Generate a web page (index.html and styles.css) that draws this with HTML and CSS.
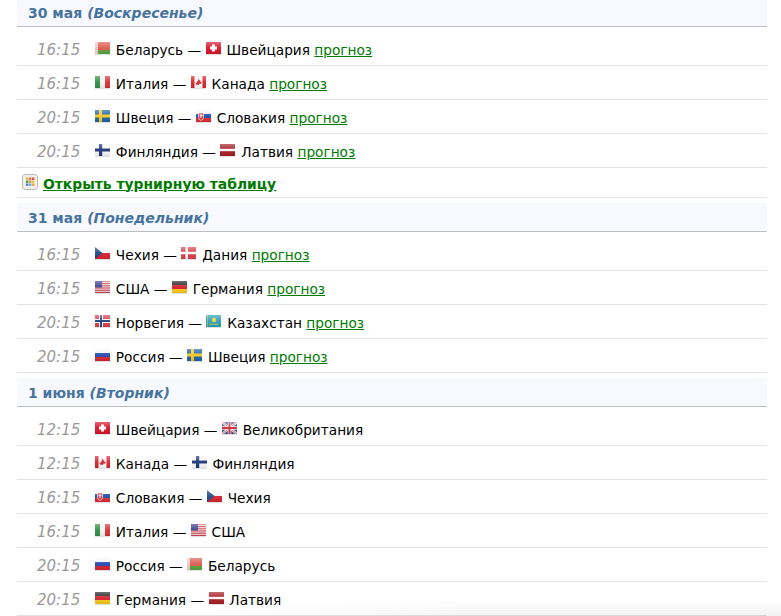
FILE: index.html
```html
<!DOCTYPE html>
<html lang="ru">
<head>
<meta charset="utf-8">
<title>Расписание</title>
<link rel="stylesheet" href="styles.css">
</head>
<body>
<svg class="defs" width="0" height="0" aria-hidden="true">
  <defs>
    <linearGradient id="gloss" x1="0" y1="0" x2="0" y2="1">
      <stop offset="0" stop-color="#fff" stop-opacity=".35"/>
      <stop offset=".5" stop-color="#fff" stop-opacity=".05"/>
      <stop offset="1" stop-color="#000" stop-opacity=".08"/>
    </linearGradient>
    <symbol id="by" viewBox="0 0 15 12"><rect width="15" height="8" fill="#dd5a4e"/><rect y="8" width="15" height="4" fill="#5da13f"/><rect width="3" height="12" fill="#f0c8c0"/></symbol>
    <symbol id="ch" viewBox="0 0 15 12"><rect width="15" height="12" fill="#d8132b"/><rect x="6" y="2.500" width="3" height="7" fill="#fff"/><rect x="4" y="4.500" width="7" height="3" fill="#fff"/></symbol>
    <symbol id="it" viewBox="0 0 15 12"><rect width="5" height="12" fill="#2f8f46"/><rect x="5" width="5" height="12" fill="#f4f4f0"/><rect x="10" width="5" height="12" fill="#d6323a"/></symbol>
    <symbol id="ca" viewBox="0 0 15 12"><rect width="15" height="12" fill="#fafafa"/><rect width="3.500" height="12" fill="#d8232a"/><rect x="11.500" width="3.500" height="12" fill="#d8232a"/><path d="M7.500 2.500l1 1.800.9-.4-.3 2.200 1.300-.6.300 1-.9 1.200H8v1.300H7V8.700H5.400l-.9-1.200.3-1 1.300.6-.3-2.200.9.400z" fill="#d8232a"/></symbol>
    <symbol id="se" viewBox="0 0 15 12"><rect width="15" height="12" fill="#1f62a8"/><rect x="4" width="3" height="12" fill="#f5c81e"/><rect y="4.500" width="15" height="3" fill="#f5c81e"/></symbol>
    <symbol id="sk" viewBox="0 0 15 12"><rect width="15" height="4" fill="#f5f5f5"/><rect y="4" width="15" height="4" fill="#1c50a8"/><rect y="8" width="15" height="4" fill="#dc2b34"/><path d="M2.500 3h5v4.500Q7.500 9.500 5 10.500 2.500 9.500 2.500 7.500z" fill="#dc2b34" stroke="#fff" stroke-width=".7"/><rect x="4.500" y="4" width="1" height="4" fill="#fff"/><rect x="3.500" y="5.200" width="3" height=".9" fill="#fff"/></symbol>
    <symbol id="fi" viewBox="0 0 15 12"><rect width="15" height="12" fill="#f6f6f6"/><rect x="4" width="3.200" height="12" fill="#1c3578"/><rect y="4.500" width="15" height="3" fill="#1c3578"/></symbol>
    <symbol id="lv" viewBox="0 0 15 12"><rect width="15" height="12" fill="#a81c24"/><rect y="4.800" width="15" height="2.400" fill="#fafafa"/></symbol>
    <symbol id="cz" viewBox="0 0 15 12"><rect width="15" height="6" fill="#f5f5f5"/><rect y="6" width="15" height="6" fill="#d7232e"/><path d="M0 0l7.500 6L0 12z" fill="#1e4a8c"/></symbol>
    <symbol id="dk" viewBox="0 0 15 12"><rect width="15" height="12" fill="#d9404a"/><rect x="4.500" width="2.400" height="12" fill="#fff"/><rect y="4.800" width="15" height="2.400" fill="#fff"/></symbol>
    <symbol id="us" viewBox="0 0 15 12"><rect width="15" height="12" fill="#f4f4f4"/><path d="M0 .7h15M0 2.500h15M0 4.300h15M0 6.100h15M0 7.900h15M0 9.700h15M0 11.500h15" stroke="#c9303c" stroke-width=".9"/><rect width="7" height="6.500" fill="#3c3f8f"/></symbol>
    <symbol id="de" viewBox="0 0 15 12"><rect width="15" height="4" fill="#222"/><rect y="4" width="15" height="4" fill="#d7202a"/><rect y="8" width="15" height="4" fill="#f6c81c"/></symbol>
    <symbol id="no" viewBox="0 0 15 12"><rect width="15" height="12" fill="#dc3c48"/><rect x="4" width="4" height="12" fill="#fff"/><rect y="4" width="15" height="4" fill="#fff"/><rect x="5" width="2" height="12" fill="#1d3f80"/><rect y="5" width="15" height="2" fill="#1d3f80"/></symbol>
    <symbol id="kz" viewBox="0 0 15 12"><rect width="15" height="12" fill="#2a9fb5"/><circle cx="8" cy="5" r="2.200" fill="#eed03a"/><path d="M3 9.200h9" stroke="#eed03a" stroke-width=".8"/><rect x="1" width="1" height="12" fill="#8fb872"/></symbol>
    <symbol id="ru" viewBox="0 0 15 12"><rect width="15" height="4" fill="#f6f6f6"/><rect y="4" width="15" height="4" fill="#2448b0"/><rect y="8" width="15" height="4" fill="#d7232e"/></symbol>
    <symbol id="gb" viewBox="0 0 15 12"><rect width="15" height="12" fill="#3d4a8e"/><path d="M0 0l15 12M15 0L0 12" stroke="#fff" stroke-width="2.200"/><path d="M0 0l15 12M15 0L0 12" stroke="#cf3a48" stroke-width=".8"/><rect x="5.800" width="3.400" height="12" fill="#fff"/><rect y="4.300" width="15" height="3.400" fill="#fff"/><rect x="6.500" width="2" height="12" fill="#cf2b3a"/><rect y="5" width="15" height="2" fill="#cf2b3a"/></symbol>
    <symbol id="flag-gloss" viewBox="0 0 15 12"><rect width="15" height="12" fill="url(#gloss)"/></symbol>
  </defs>
</svg>

<main class="schedule">
  <h2 class="day day-first">30 мая <em>(Воскресенье)</em></h2>
  <ul class="matches">
    <li class="match"><span class="time">16:15</span><span class="teams"><svg class="flag"><use href="#by"/><use href="#flag-gloss"/></svg> Беларусь — <svg class="flag"><use href="#ch"/><use href="#flag-gloss"/></svg> Швейцария <a href="#">прогноз</a></span></li>
    <li class="match"><span class="time">16:15</span><span class="teams"><svg class="flag"><use href="#it"/><use href="#flag-gloss"/></svg> Италия — <svg class="flag"><use href="#ca"/><use href="#flag-gloss"/></svg> Канада <a href="#">прогноз</a></span></li>
    <li class="match"><span class="time">20:15</span><span class="teams"><svg class="flag"><use href="#se"/><use href="#flag-gloss"/></svg> Швеция — <svg class="flag"><use href="#sk"/><use href="#flag-gloss"/></svg> Словакия <a href="#">прогноз</a></span></li>
    <li class="match"><span class="time">20:15</span><span class="teams"><svg class="flag"><use href="#fi"/><use href="#flag-gloss"/></svg> Финляндия — <svg class="flag"><use href="#lv"/><use href="#flag-gloss"/></svg> Латвия <a href="#">прогноз</a></span></li>
  </ul>
  <p class="table-link">
    <svg class="table-icon" viewBox="0 0 16 16" aria-hidden="true">
      <rect x=".5" y=".5" width="15" height="15" rx="3" fill="#f1efe9" stroke="#b9b9b5"/>
      <rect x="4" y="3.500" width="2.400" height="2.400" fill="#e8b23a"/><rect x="7" y="3.500" width="2.400" height="2.400" fill="#e86a5a"/><rect x="10" y="3.500" width="2.400" height="2.400" fill="#d84a4a"/>
      <rect x="4" y="6.500" width="2.400" height="2.400" fill="#4a9a4a"/><rect x="7" y="6.500" width="2.400" height="2.400" fill="#e8963a"/><rect x="10" y="6.500" width="2.400" height="2.400" fill="#e8c83a"/>
      <rect x="4" y="9.500" width="2.400" height="2.400" fill="#4a7ad8"/><rect x="7" y="9.500" width="2.400" height="2.400" fill="#5ab0d8"/><rect x="10" y="9.500" width="2.400" height="2.400" fill="#f0a030"/>
    </svg>
    <a href="#">Открыть турнирную таблицу</a>
  </p>

  <h2 class="day">31 мая <em>(Понедельник)</em></h2>
  <ul class="matches">
    <li class="match"><span class="time">16:15</span><span class="teams"><svg class="flag"><use href="#cz"/><use href="#flag-gloss"/></svg> Чехия — <svg class="flag"><use href="#dk"/><use href="#flag-gloss"/></svg> Дания <a href="#">прогноз</a></span></li>
    <li class="match"><span class="time">16:15</span><span class="teams"><svg class="flag"><use href="#us"/><use href="#flag-gloss"/></svg> США — <svg class="flag"><use href="#de"/><use href="#flag-gloss"/></svg> Германия <a href="#">прогноз</a></span></li>
    <li class="match"><span class="time">20:15</span><span class="teams"><svg class="flag"><use href="#no"/><use href="#flag-gloss"/></svg> Норвегия — <svg class="flag"><use href="#kz"/><use href="#flag-gloss"/></svg> Казахстан <a href="#">прогноз</a></span></li>
    <li class="match"><span class="time">20:15</span><span class="teams"><svg class="flag"><use href="#ru"/><use href="#flag-gloss"/></svg> Россия — <svg class="flag"><use href="#se"/><use href="#flag-gloss"/></svg> Швеция <a href="#">прогноз</a></span></li>
  </ul>

  <h2 class="day">1 июня <em>(Вторник)</em></h2>
  <ul class="matches">
    <li class="match"><span class="time">12:15</span><span class="teams"><svg class="flag"><use href="#ch"/><use href="#flag-gloss"/></svg> Швейцария — <svg class="flag"><use href="#gb"/><use href="#flag-gloss"/></svg> Великобритания</span></li>
    <li class="match"><span class="time">12:15</span><span class="teams"><svg class="flag"><use href="#ca"/><use href="#flag-gloss"/></svg> Канада — <svg class="flag"><use href="#fi"/><use href="#flag-gloss"/></svg> Финляндия</span></li>
    <li class="match"><span class="time">16:15</span><span class="teams"><svg class="flag"><use href="#sk"/><use href="#flag-gloss"/></svg> Словакия — <svg class="flag"><use href="#cz"/><use href="#flag-gloss"/></svg> Чехия</span></li>
    <li class="match"><span class="time">16:15</span><span class="teams"><svg class="flag"><use href="#it"/><use href="#flag-gloss"/></svg> Италия — <svg class="flag"><use href="#us"/><use href="#flag-gloss"/></svg> США</span></li>
    <li class="match"><span class="time">20:15</span><span class="teams"><svg class="flag"><use href="#ru"/><use href="#flag-gloss"/></svg> Россия — <svg class="flag"><use href="#by"/><use href="#flag-gloss"/></svg> Беларусь</span></li>
    <li class="match"><span class="time">20:15</span><span class="teams"><svg class="flag"><use href="#de"/><use href="#flag-gloss"/></svg> Германия — <svg class="flag"><use href="#lv"/><use href="#flag-gloss"/></svg> Латвия</span></li>
  </ul>
</main>
</body>
</html>
```

FILE: styles.css
```css
html, body {
  margin: 0;
  padding: 0;
  background: #fff;
  height: 616px;
  overflow: hidden;
}

body {
  position: relative;
  font-family: "DejaVu Sans", Verdana, sans-serif;
  font-size: 13.7px;
  color: #000;
}

/* faint shadow that lies over the bottom edge of the page */
body::after {
  content: "";
  position: absolute;
  left: 200px;
  right: 0;
  bottom: 0;
  height: 16px;
  background: linear-gradient(to bottom, rgba(0, 0, 0, 0), rgba(0, 0, 0, .05));
  -webkit-mask-image: linear-gradient(to right, transparent, #000 50%);
  mask-image: linear-gradient(to right, transparent, #000 50%);
  pointer-events: none;
}

.defs {
  display: block;
  height: 0;
}

.schedule {
  width: 750px;
  margin-left: 17px;
}

.day {
  height: 27px;
  margin: 5px 0 0;
  padding: 1px 0 0 11px;
  background: #f7f9fe;
  border-bottom: 1px solid #bcbcc2;
  color: #47739f;
  font-size: 14px;
  font-weight: 700;
  line-height: 28px;
}

.day-first {
  height: 26px;
  margin-top: 0;
  padding-top: 0;
  line-height: 27px;
}

.matches {
  list-style: none;
  margin: 0;
  padding: 5px 0 0;
}

.match {
  display: flex;
  align-items: center;
  height: 31px;
  padding-top: 2px;
  border-bottom: 1px solid #e4e4e4;
}

.time {
  width: 78px;
  padding-left: 20px;
  box-sizing: border-box;
  color: #999;
  font-size: 15px;
  font-style: italic;
}

.teams {
  white-space: nowrap;
}

.flag {
  display: inline-block;
  width: 15px;
  height: 12px;
  margin-right: 1.5px;
  vertical-align: 1px;
  filter: drop-shadow(0 1px 0 rgba(0, 0, 0, .12));
}

.teams a {
  color: #007a00;
  text-decoration: underline;
}

.table-link {
  display: flex;
  align-items: center;
  gap: 5px;
  height: 27px;
  margin: 0;
  padding: 2px 0 0 5px;
  border-bottom: 1px solid #e4e4e4;
  font-size: 13.9px;
  font-weight: 700;
}

.table-link a {
  color: #007a00;
  text-decoration: underline;
}

.table-icon {
  width: 16px;
  height: 16px;
  flex: none;
  margin-top: -4px;
}
```
